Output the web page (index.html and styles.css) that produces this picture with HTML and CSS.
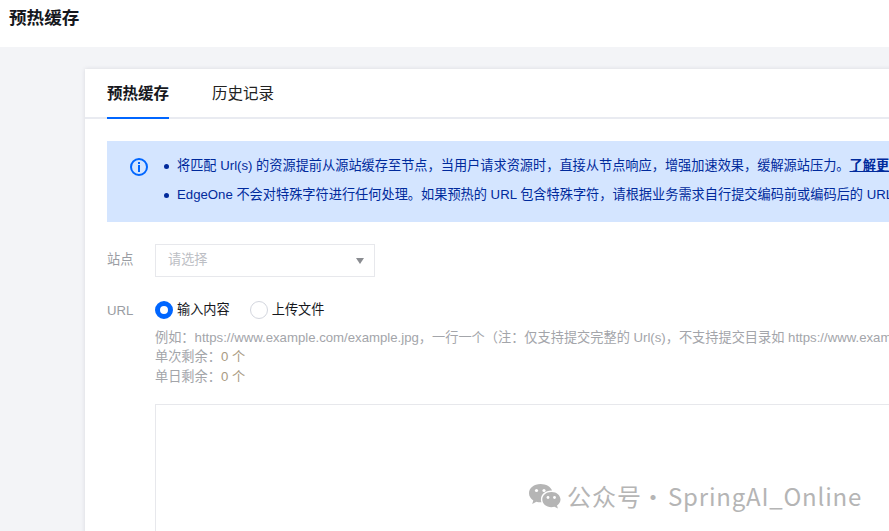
FILE: index.html
```html
<!DOCTYPE html>
<html lang="zh-CN">
<head>
<meta charset="utf-8">
<title>预热缓存</title>
<link rel="stylesheet" href="styles.css">
</head>
<body>
<header class="page-header"><h1 class="page-title">预热缓存</h1></header>
<main class="content">
  <section class="card">
    <nav class="tabs">
      <a class="tab tab-active">预热缓存</a>
      <a class="tab">历史记录</a>
    </nav>
    <div class="card-body">
      <div class="alert">
        <svg class="alert-icon" width="18" height="18" viewBox="0 0 18 18">
          <circle cx="9" cy="9" r="8" fill="none" stroke="#0066ff" stroke-width="2"/>
          <rect x="8" y="4" width="2" height="2" fill="#0066ff"/>
          <rect x="8" y="7" width="2" height="7" fill="#0066ff"/>
        </svg>
        <ul class="alert-list">
          <li>将匹配 Url(s) 的资源提前从源站缓存至节点，当用户请求资源时，直接从节点响应，增强加速效果，缓解源站压力。<a class="alert-link">了解更多</a></li>
          <li>EdgeOne 不会对特殊字符进行任何处理。如果预热的 URL 包含特殊字符，请根据业务需求自行提交编码前或编码后的 URL。</li>
        </ul>
      </div>
      <div class="form-row form-row-site">
        <label class="form-label label-site">站点</label>
        <div class="select"><span class="select-text">请选择</span><i class="select-arrow"></i></div>
      </div>
      <div class="form-row">
        <label class="form-label label-url">URL</label>
        <div class="form-control">
          <div class="radios">
            <span class="radio radio-on"><i class="radio-dot"></i>输入内容</span>
            <span class="radio"><i class="radio-dot"></i>上传文件</span>
          </div>
          <p class="hint hint-example">例如：https://www.example.com/example.jpg，一行一个（注：仅支持提交完整的 Url(s)，不支持提交目录如 https://www.example.com/）</p>
          <p class="hint">单次剩余：<span class="count">0 个</span></p>
          <p class="hint">单日剩余：<span class="count">0 个</span></p>
          <div class="textarea"></div>
        </div>
      </div>
    </div>
  </section>
</main>
<div class="watermark">
  <svg width="33" height="26" viewBox="0 0 33 26">
    <path d="M12.5 1C6 1 1 5 1 10.200c0 3 1.700 5.500 4.300 7.200L4.200 21l4.200-2.300c1.300.4 2.700.6 4.100.6h1C13 18 12.900 17.200 12.900 16.400c0-5 4.600-8.800 10.300-8.800h.9C22.700 3.800 18 1 12.500 1z" fill="#b5b5b5"/>
    <path d="M23.300 9C18.100 9 14.300 12.400 14.300 16.600s3.800 7.600 9 7.600c1.100 0 2.200-.2 3.200-.5l3.400 1.900-.9-3c2.200-1.500 3.500-3.600 3.500-6 0-4.200-3.800-7.600-8.800-7.600z" fill="#b5b5b5"/>
    <circle cx="8.500" cy="7.500" r="1.600" fill="#fff"/><circle cx="16" cy="7.500" r="1.600" fill="#fff"/>
    <circle cx="20" cy="14.500" r="1.400" fill="#fff"/><circle cx="26.500" cy="14.500" r="1.400" fill="#fff"/>
  </svg>
  <span class="wm-cn">公众号</span><span class="wm-dot">·</span><span class="wm-en">SpringAI_Online</span>
</div>
</body>
</html>
```
FILE: styles.css
```css
html, body {
  margin: 0;
  height: 531px;
  overflow: hidden;
  background: #f3f4f7;
}
body {
  position: relative;
  font-family: "Liberation Sans", "Noto Sans CJK SC", sans-serif;
  font-size: 12px;
  color: #16181d;
}
.page-header {
  height: 47px;
  background: #fff;
  display: flex;
  padding-left: 9px;
}
.page-title {
  margin: 6px 0 0;
  font-size: 17.600px;
  line-height: 24px;
  font-weight: 700;
  color: #16181d;
}
.content {
  padding: 22px 0 0 85px;
}
.card {
  width: 1100px;
  height: 500px;
  background: #fff;
  box-shadow: 0 0 4px rgba(54, 58, 80, 0.14);
}
.tabs {
  display: flex;
  gap: 43px;
  height: 48px;
  padding-left: 22px;
  border-bottom: 2px solid #e9ebf1;
}
.tab {
  height: 50px;
  box-sizing: border-box;
  padding-top: 14px;
  font-size: 15.500px;
  line-height: 22px;
  color: #222;
}
.tab-active {
  font-weight: 700;
  color: #16181d;
  border-bottom: 2px solid #0066ff;
}
.card-body {
  padding: 22px 0 0 22px;
}
.alert {
  display: flex;
  height: 81px;
  box-sizing: border-box;
  padding: 17px 0 0 23px;
  background: #d4e5ff;
  color: #002a9c;
}
.alert-icon {
  flex: none;
  margin-right: 16px;
}
.alert-list {
  margin: 0;
  padding: 0;
  list-style: none;
  font-size: 13.200px;
  line-height: 20px;
  white-space: nowrap;
}
.alert-list li {
  position: relative;
  height: 29px;
  padding-left: 13px;
  margin-top: -2px;
}
.alert-list li + li {
  margin-top: 0;
}
.alert-list li::before {
  content: "";
  position: absolute;
  left: 0;
  top: 8px;
  width: 5px;
  height: 5px;
  border-radius: 50%;
  background: #002a9c;
}
.alert-link {
  font-weight: 700;
  text-decoration: underline;
}
.form-row {
  display: flex;
  font-size: 13.200px;
}
.form-row-site {
  margin-top: 22px;
  height: 57px;
}
.form-label {
  flex: none;
  width: 48px;
  color: #9a9da3;
}
.label-site { line-height: 32px; }
.label-url { line-height: 20px; }
.select {
  width: 220px;
  height: 33px;
  box-sizing: border-box;
  border: 1px solid #e7e8ec;
  padding: 0 12px;
  display: flex;
  align-items: center;
  justify-content: space-between;
  color: #bcbec4;
}
.select-text {
  margin-top: -4px;
}
.select-arrow {
  width: 0;
  height: 0;
  margin-right: -2px;
  border-left: 4.500px solid transparent;
  border-right: 4.500px solid transparent;
  border-top: 6px solid #8a8c91;
}
.form-control {
  white-space: nowrap;
}
.radios {
  display: flex;
  gap: 20px;
  height: 27px;
}
.radio {
  display: flex;
  align-items: center;
  gap: 4px;
  height: 18px;
  line-height: 18px;
  color: #16181d;
}
.radio-dot {
  width: 18px;
  height: 18px;
  box-sizing: border-box;
  border: 1px solid #d3d6de;
  border-radius: 50%;
  background: #fff;
}
.radio-on .radio-dot {
  border: 5px solid #0066ff;
}
.hint {
  margin: 0;
  height: 20px;
  line-height: 20px;
  font-size: 13.200px;
  color: #a3a5aa;
}
.hint-example {
  height: 19px;
}
.count { color: #a89a82; }
.textarea {
  width: 1000px;
  height: 200px;
  margin-top: 17px;
  border: 1px solid #e7e8ec;
  box-sizing: border-box;
}
.watermark {
  position: absolute;
  left: 528px;
  top: 482px;
  display: flex;
  align-items: center;
  color: #b5b5b5;
  font-family: "Noto Sans CJK SC", "Noto Sans", sans-serif;
  font-size: 24px;
  line-height: 28px;
  white-space: nowrap;
}
.wm-cn {
  margin-left: 6px;
  letter-spacing: 1px;
}
.wm-dot {
  margin-left: -1px;
}
.wm-en {
  margin-left: 3px;
  letter-spacing: 0.800px;
}
```
